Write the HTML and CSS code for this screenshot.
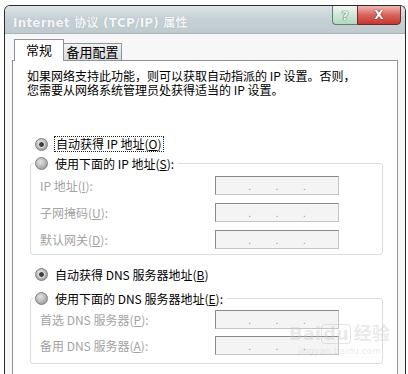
FILE: index.html
```html
<!DOCTYPE html>
<html>
<head>
  <meta charset="UTF-8">
  <title>Internet 协议 (TCP/IP) 属性</title>
  <link rel="stylesheet" href="styles.css">
</head>
<body>
<div class="window">
  <div class="titlebar">
    <span class="title">Internet 协议 (TCP/IP) 属性</span>
    <div class="caption-buttons">
      <span class="cbtn help">?</span>
      <span class="cbtn close">X</span>
    </div>
  </div>
  <div class="client">
    <div class="tabs">
      <div class="tab active">常规</div>
      <div class="tab">备用配置</div>
    </div>
    <div class="panel">
      <p class="intro">如果网络支持此功能，则可以获取自动指派的 IP 设置。否则，<br>您需要从网络系统管理员处获得适当的 IP 设置。</p>

      <div class="option first"><span class="radio on"></span><span class="focus">自动获得 IP 地址(<u>O</u>)</span></div>
      <fieldset class="group ip">
        <legend class="option"><span class="radio"></span>使用下面的 IP 地址(<u>S</u>):</legend>
        <div class="row"><label>IP 地址(<u>I</u>):</label><span class="ipbox"><i>.</i><i>.</i><i>.</i></span></div>
        <div class="row"><label>子网掩码(<u>U</u>):</label><span class="ipbox"><i>.</i><i>.</i><i>.</i></span></div>
        <div class="row"><label>默认网关(<u>D</u>):</label><span class="ipbox"><i>.</i><i>.</i><i>.</i></span></div>
      </fieldset>

      <div class="option dns-auto"><span class="radio on"></span>自动获得 DNS 服务器地址(<u>B</u>)</div>
      <fieldset class="group dns">
        <legend class="option"><span class="radio"></span>使用下面的 DNS 服务器地址(<u>E</u>):</legend>
        <div class="row"><label>首选 DNS 服务器(<u>P</u>):</label><span class="ipbox"><i>.</i><i>.</i><i>.</i></span></div>
        <div class="row"><label>备用 DNS 服务器(<u>A</u>):</label><span class="ipbox"><i>.</i><i>.</i><i>.</i></span></div>
      </fieldset>

      <div class="watermark">
        <span class="wm-logo">Bai<span class="wm-du">du</span>经验</span>
        <span class="wm-url">jingyan.baidu.com</span>
      </div>
    </div>
  </div>
</div>
</body>
</html>
```

FILE: styles.css
```css
body { margin: 0; overflow: hidden; background: #fff; font-family: "Noto Sans CJK SC", "DejaVu Sans", sans-serif; font-size: 12px; color: #000; }

.window { margin: 5px 0 0 4px; width: 400px; height: 369px; border: 1px solid #2a2a2a; border-bottom: none; border-radius: 6px 6px 0 0; overflow: hidden; background: #f7f7f7; }

.titlebar { display: flex; align-items: flex-start; height: 27px; background: linear-gradient(#dde4e7, #c7d1d5 45%, #bfcacf); border-bottom: 1px solid #a9b4b9; }
.title { flex: 1; padding: 7px 0 0 8px; font-family: "DejaVu Sans", "Noto Sans CJK SC", sans-serif; font-weight: bold; font-size: 12px; color: #f3f6f7; text-shadow: 0 0 1px #9aa6ab; letter-spacing: 0.2px; }

.caption-buttons { display: flex; margin: -1px 4px 0 0; }
.cbtn { display: flex; align-items: center; justify-content: center; height: 18px; font-family: "DejaVu Sans", sans-serif; font-weight: bold; }
.help { width: 24px; background: linear-gradient(#f1f8f3, #cfe6d7 50%, #b4d8c1); border: 1px solid #5e7f6c; border-right: none; border-radius: 0 0 0 4px; color: #eef6f0; font-size: 13px; text-shadow: 0 0 1px #2f5a41, 0 0 1px #2f5a41; }
.close { width: 42px; background: linear-gradient(#efb9b3, #d9645c 50%, #c3392f); border: 1px solid #6f2a25; border-radius: 0 0 4px 0; color: #fff; font-size: 12px; text-shadow: 0 0 1px #4a1410, 0 0 1px #4a1410; }

.client { padding: 5px 7px 0 7px; }

.tabs { display: flex; align-items: flex-end; margin-left: 2px; height: 21px; }
.tab { position: relative; font-size: 13px; line-height: 15px; border: 1px solid #8d949c; border-bottom: none; }
.tab.active { z-index: 1; height: 21px; width: 48px; margin-bottom: -1px; background: #fff; text-align: center; line-height: 20px; }
.tab:not(.active) { height: 16px; width: 57px; background: linear-gradient(#f2f2f2, #d9d9d9); border-left: none; text-align: center; }

.panel { position: relative; height: 320px; background: #fff; border: 1px solid #8d949c; border-bottom: none; }

.intro { margin: 0; padding: 8px 0 0 14px; line-height: 14px; font-size: 12px; }

.option { display: flex; align-items: center; height: 16px; white-space: nowrap; }
.option.first { margin: 39px 0 0 22px; }
.focus { outline: 1px dotted #222; padding: 0 1px; line-height: 14px; }

.radio { flex: none; position: relative; width: 11px; height: 11px; margin-right: 7px; border: 1px solid #7d7d7d; border-radius: 50%; background: radial-gradient(circle at 40% 35%, #e4e4e4, #a8a8a8 70%, #8f8f8f); }
.radio.on::after { content: ""; position: absolute; left: 2px; top: 2px; width: 5px; height: 5px; border: 1px solid #f4f4f4; border-radius: 50%; background: #3f3f3f; }

.group { margin: 3px 14px 0 17px; padding: 0 0 5px 0; border: 1px solid #d6dde3; border-radius: 3px; }
.group legend { padding: 0 4px 0 1px; margin-left: 3px; }
.group.ip .row:first-of-type { margin-top: 5px; }
.group.dns { margin-top: 8px; padding-bottom: 8px; }
.group.dns .row:first-of-type { margin-top: 4px; }

.row { display: flex; align-items: center; height: 19px; padding-left: 9px; margin-top: 8px; color: #a3a3a3; }
.group.dns .row { margin-top: 7px; }
.row label { width: 175px; }

.ipbox { display: flex; justify-content: space-around; align-items: center; box-sizing: border-box; width: 124px; height: 19px; padding: 0 20px; border: 1px solid; border-color: #8a8a8a #c4c4c4 #c4c4c4 #8a8a8a; background: #f4f4f4; }
.ipbox i { font-style: normal; font-size: 10px; color: #9a9a9a; line-height: 10px; }

.option.dns-auto { margin: 11px 0 0 22px; }

.watermark { position: absolute; left: 276px; top: 262px; display: flex; flex-direction: column; align-items: center; white-space: nowrap; color: rgba(200, 200, 200, 0.4); pointer-events: none; }
.wm-logo { font-family: "DejaVu Sans", "Noto Sans CJK SC", sans-serif; font-weight: bold; font-size: 18px; line-height: 22px; }
.wm-du { display: inline-block; margin-right: 3px; border: 1px solid rgba(200, 200, 200, 0.5); border-radius: 4px; padding: 0 1px; line-height: 18px; }
.wm-url { font-family: "DejaVu Sans", sans-serif; font-size: 9px; line-height: 12px; }
```
